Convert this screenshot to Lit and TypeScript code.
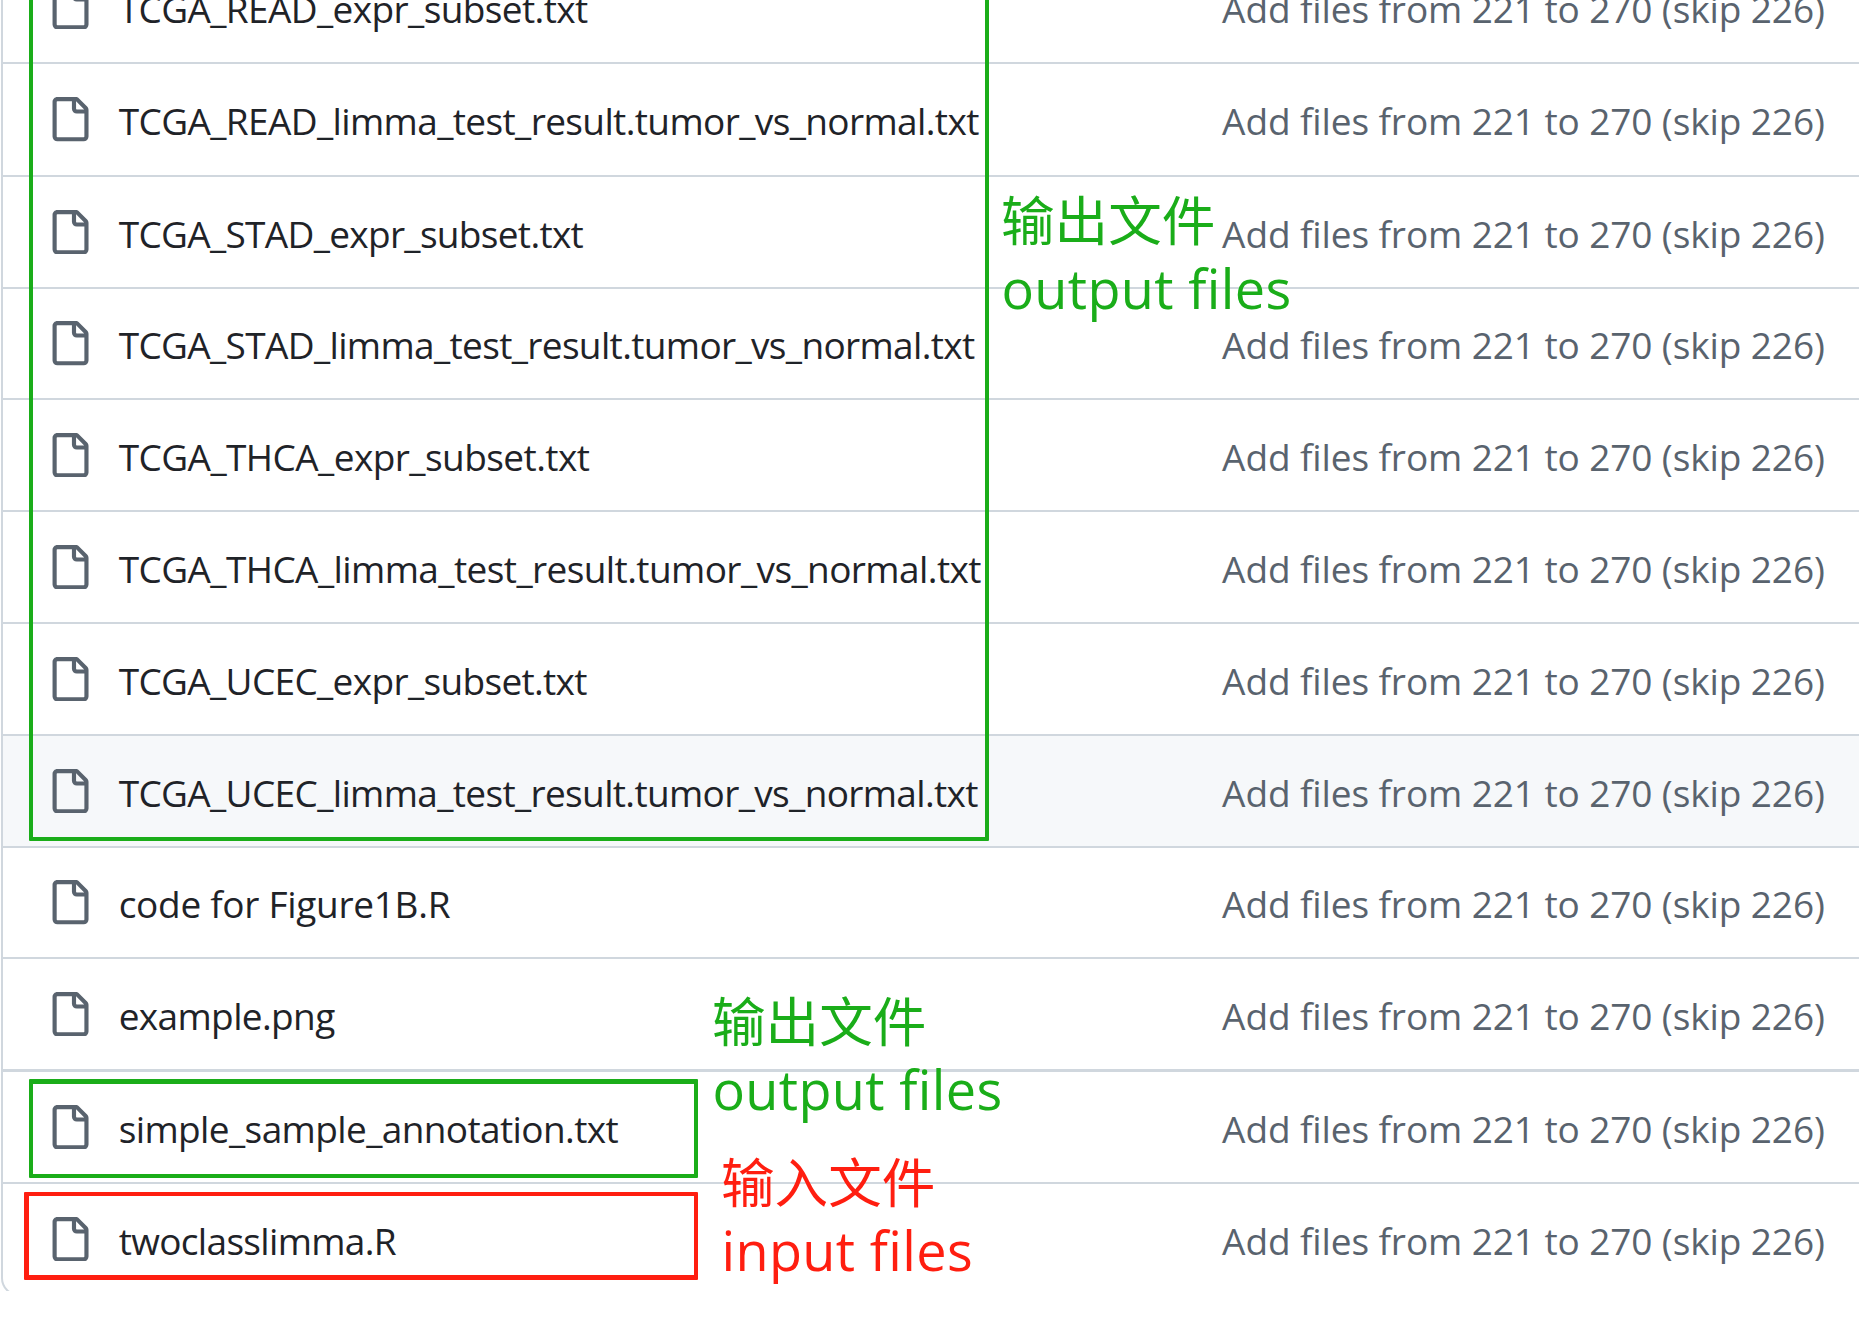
import { LitElement, html, css } from "lit";
import { classMap } from "lit/directives/class-map.js";
import { styleMap } from "lit/directives/style-map.js";

interface FileEntry {
  name: string;
  tracking: number;
  hovered?: boolean;
}

const MESSAGE = "Add files from 221 to 270 (skip 226)";

const FILES: FileEntry[] = [
  { name: "TCGA_READ_expr_subset.txt", tracking: -0.61 },
  { name: "TCGA_READ_limma_test_result.tumor_vs_normal.txt", tracking: -0.62 },
  { name: "TCGA_STAD_expr_subset.txt", tracking: -0.68 },
  { name: "TCGA_STAD_limma_test_result.tumor_vs_normal.txt", tracking: -0.65 },
  { name: "TCGA_THCA_expr_subset.txt", tracking: -0.57 },
  { name: "TCGA_THCA_limma_test_result.tumor_vs_normal.txt", tracking: -0.59 },
  { name: "TCGA_UCEC_expr_subset.txt", tracking: -0.66 },
  { name: "TCGA_UCEC_limma_test_result.tumor_vs_normal.txt", tracking: -0.65, hovered: true },
  { name: "code for Figure1B.R", tracking: -0.3 },
  { name: "example.png", tracking: -0.63 },
  { name: "simple_sample_annotation.txt", tracking: -0.61 },
  { name: "twoclasslimma.R", tracking: -0.67 },
];

class FileRow extends LitElement {
  static properties = { file: { attribute: false } };
  declare file: FileEntry;

  static styles = css`
    :host {
      display: grid;
      min-height: 0;
    }
    .row {
      box-sizing: border-box;
      display: grid;
      grid-template-columns: 44.3px 1103px 1fr;
      align-items: center;
      padding-left: 43.8px;
      border-top: 2px solid #d0d7de;
      font: 37px/50px "Open Sans", "Noto Sans", sans-serif;
      white-space: nowrap;
    }
    .hovered {
      background: #f6f8fa;
    }
    .icon {
      display: block;
      width: 44.3px;
      height: 44.3px;
      fill: #59636e;
    }
    .name,
    .message {
      padding-top: 3px;
    }
    .name {
      padding-left: 27.6px;
      color: #1f2328;
    }
    .message {
      padding-left: 28px;
      color: #59636e;
      letter-spacing: -0.1px;
    }
  `;

  render() {
    const { name, tracking, hovered } = this.file;
    return html`
      <div class=${classMap({ row: true, hovered: !!hovered })}>
        <svg class="icon" viewBox="0 0 16 16" aria-hidden="true">
          <path
            d="M2 1.75C2 .784 2.784 0 3.75 0h6.586c.464 0 .909.184 1.237.513l2.914 2.914c.329.328.513.773.513 1.237v9.586A1.75 1.75 0 0 1 13.25 16h-9.5A1.75 1.75 0 0 1 2 14.25Zm1.75-.25a.25.25 0 0 0-.25.25v12.5c0 .138.112.25.25.25h9.5a.25.25 0 0 0 .25-.25V6h-2.75A1.75 1.75 0 0 1 9 4.25V1.5Zm6.75.062V4.25c0 .138.112.25.25.25h2.688l-.011-.013-2.914-2.914-.013-.011Z"
          ></path>
        </svg>
        <span class="name" style=${styleMap({ letterSpacing: `${tracking}px` })}>${name}</span>
        <span class="message">${MESSAGE}</span>
      </div>
    `;
  }
}
customElements.define("file-row", FileRow);

class AppRoot extends LitElement {
  static styles = css`
    :host {
      display: block;
      position: relative;
      height: 1340px;
      overflow: hidden;
      background: #fff;
    }
    .viewport {
      height: 1291px;
      overflow: hidden;
    }
    .list {
      display: grid;
      grid-template-rows: 112px 113px 112px 111px 112px 112px 112px 112px 111px 112px 113px 112px;
      margin: -50px -24px 0 1px;
      border: solid #d0d7de;
      border-width: 0 2px 2px;
      border-radius: 0 0 18px 18px;
    }
    .heavy {
      border-top: 1px solid #d0d7de;
    }
    .frame {
      position: absolute;
      box-sizing: border-box;
      border: 4px solid #1aad19;
      border-radius: 1px;
    }
    .frame-results {
      left: 29px;
      top: -10px;
      width: 960px;
      height: 851px;
    }
    .frame-annotation {
      left: 29px;
      top: 1079px;
      width: 669px;
      height: 99px;
      border-top-width: 5px;
    }
    .frame-script {
      left: 24px;
      top: 1192px;
      width: 674px;
      height: 88px;
      border-color: #ff1e10;
      border-left-width: 5px;
      border-bottom-width: 5px;
    }
    .note {
      position: absolute;
      color: #1aad19;
      white-space: nowrap;
    }
    .zh {
      font: 53.6px/68px "Noto Sans CJK SC", sans-serif;
    }
    .en {
      padding: 2px 0 0 0.5px;
      font: 54px/68px "Open Sans", "Noto Sans", sans-serif;
      letter-spacing: 0.35px;
    }
    .note-results {
      left: 1001px;
      top: 184px;
    }
    .note-annotation {
      left: 712px;
      top: 985px;
    }
    .note-script {
      left: 721px;
      top: 1146px;
      color: #ff1e10;
    }
  `;

  private note(place: string, zh: string, en: string) {
    return html`
      <div class="note ${place}">
        <div class="zh">${zh}</div>
        <div class="en">${en}</div>
      </div>
    `;
  }

  render() {
    return html`
      <div class="viewport">
        <div class="list">
          ${FILES.map(
            (file) =>
              html`<file-row
                class=${classMap({ heavy: file.name === "simple_sample_annotation.txt" })}
                .file=${file}
              ></file-row>`,
          )}
        </div>
      </div>
      <div class="frame frame-results"></div>
      <div class="frame frame-annotation"></div>
      <div class="frame frame-script"></div>
      ${this.note("note-results", "输出文件", "output files")}
      ${this.note("note-annotation", "输出文件", "output files")}
      ${this.note("note-script", "输入文件", "input files")}
    `;
  }
}
customElements.define("app-root", AppRoot);
